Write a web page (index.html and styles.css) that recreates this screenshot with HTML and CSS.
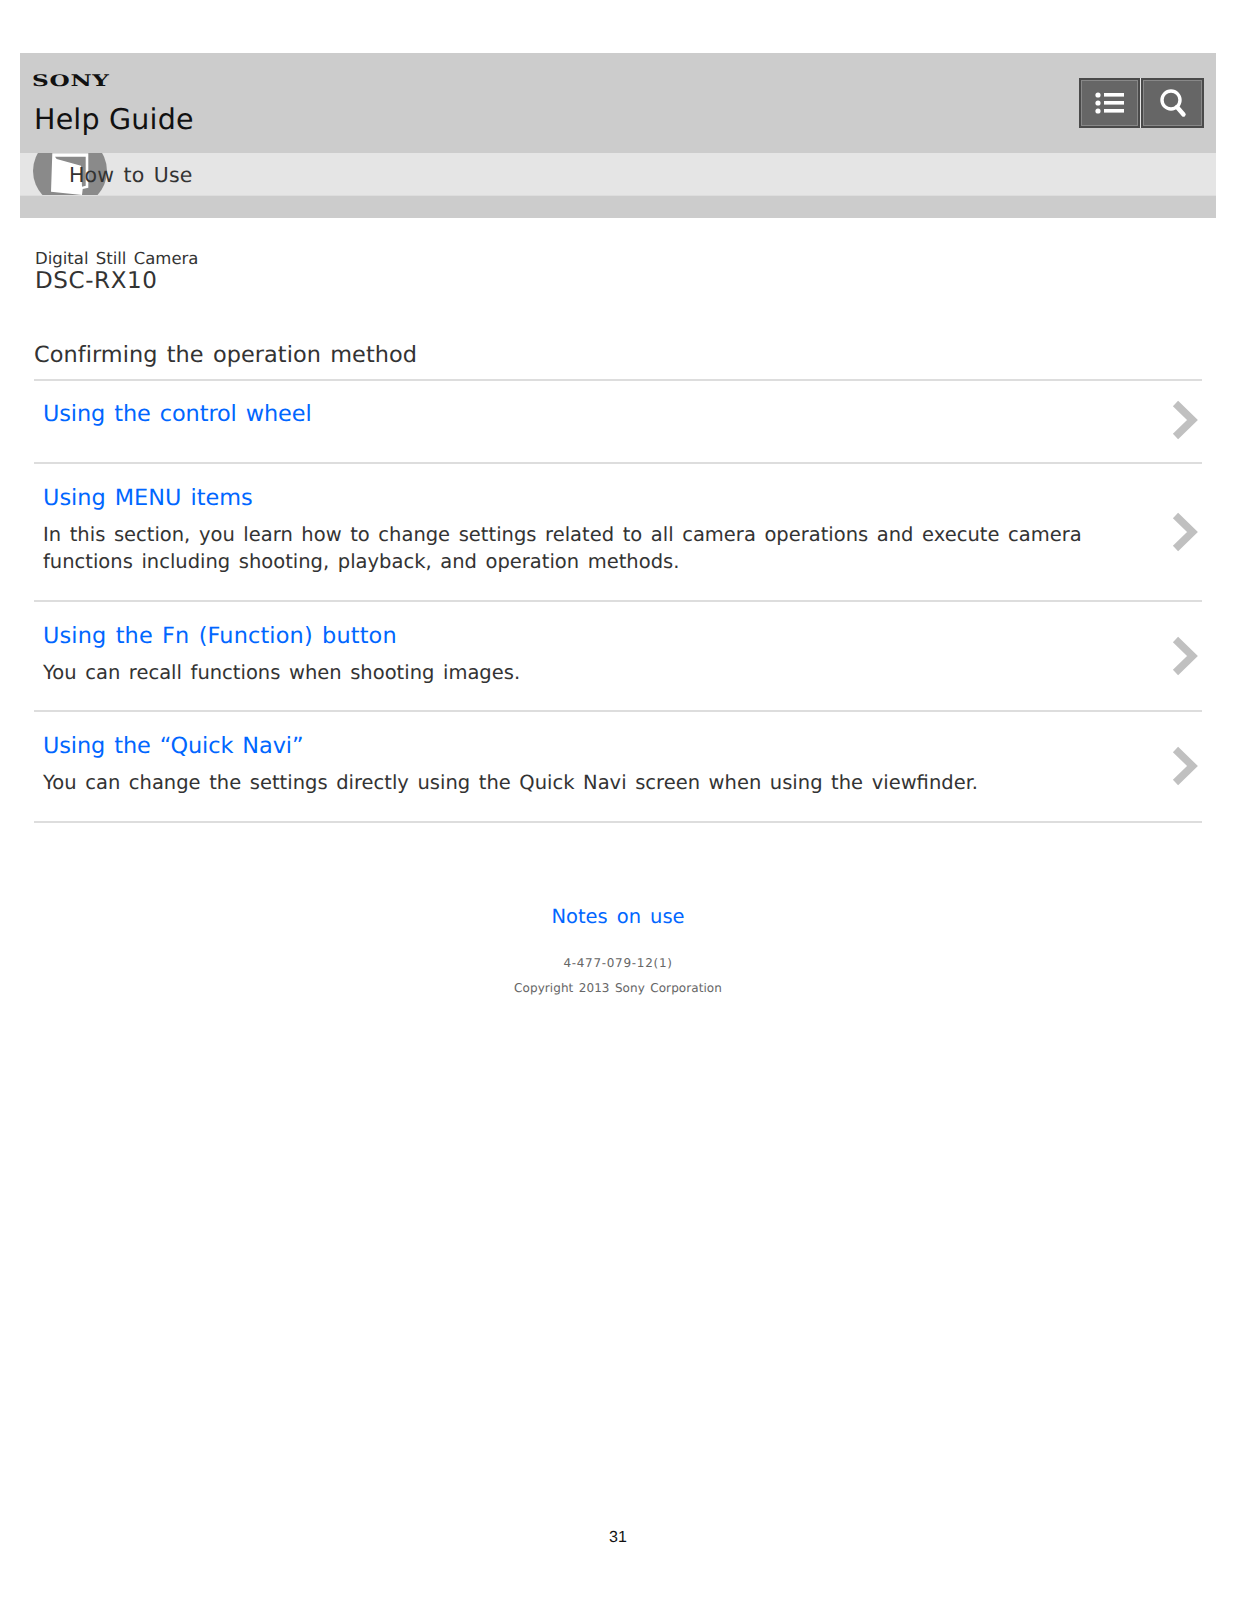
FILE: index.html
```html
<!DOCTYPE html>
<html lang="en">
<head>
<meta charset="utf-8">
<title>Help Guide</title>
<link rel="stylesheet" href="styles.css">
</head>
<body>
<div class="page">
<header class="header">
  <div class="top">
    <div class="brand">
      <div class="logo">SONY</div>
      <div class="title">Help Guide</div>
    </div>
    <div class="tools">
      <div class="tool"><svg width="30" height="22" viewBox="0 0 30 22"><g fill="#fff"><circle cx="3" cy="3" r="2.6"/><circle cx="3" cy="11" r="2.6"/><circle cx="3" cy="19" r="2.6"/><rect x="9" y="1" width="20" height="3.6"/><rect x="9" y="9" width="20" height="3.6"/><rect x="9" y="17" width="20" height="3.6"/></g></svg></div>
      <div class="tool"><svg width="28" height="30" viewBox="0 0 28 30"><circle cx="12" cy="12" r="9" fill="none" stroke="#fff" stroke-width="3.4"/><path d="M18 19l6.500 7.500" stroke="#fff" stroke-width="4.400" stroke-linecap="round"/></svg></div>
    </div>
  </div>
  <div class="crumb">
    <svg class="crumb-icon" width="76" height="43" viewBox="0 0 76 43"><ellipse cx="37" cy="18" rx="37" ry="36" fill="#8a8a8a"/><path d="M19.300 0.300H55.300V34.700L49.700 36L49 42L18 38.700z" fill="#fff"/><path d="M22 3.700H52.700V32.700L49 33.700L48 12.700L23.700 6z" fill="#8a8a8a"/></svg>
    <span class="crumb-text">How to Use</span>
  </div>
</header>
<section class="product">
  <div class="kind">Digital Still Camera</div>
  <div class="model">DSC-RX10</div>
</section>
<h1 class="heading">Confirming the operation method</h1>
<ul class="list">
  <li class="row row-a"><div class="body"><a class="link link-tight">Using the control wheel</a></div><svg class="chev" width="27" height="40" viewBox="0 0 27 40"><path d="M4.500 3.500l17 16.500L4.500 36.500" fill="none" stroke="#c0c0c0" stroke-width="7.500"/></svg></li>
  <li class="row"><div class="body"><a class="link">Using MENU items</a><p class="desc">In this section, you learn how to change settings related to all camera operations and execute camera functions including shooting, playback, and operation methods.</p></div><svg class="chev" width="27" height="40" viewBox="0 0 27 40"><path d="M4.500 3.500l17 16.500L4.500 36.500" fill="none" stroke="#c0c0c0" stroke-width="7.500"/></svg></li>
  <li class="row"><div class="body"><a class="link link-wide">Using the Fn (Function) button</a><p class="desc">You can recall functions when shooting images.</p></div><svg class="chev" width="27" height="40" viewBox="0 0 27 40"><path d="M4.500 3.500l17 16.500L4.500 36.500" fill="none" stroke="#c0c0c0" stroke-width="7.500"/></svg></li>
  <li class="row"><div class="body"><a class="link link-tight">Using the “Quick Navi”</a><p class="desc">You can change the settings directly using the Quick Navi screen when using the viewfinder.</p></div><svg class="chev" width="27" height="40" viewBox="0 0 27 40"><path d="M4.500 3.500l17 16.500L4.500 36.500" fill="none" stroke="#c0c0c0" stroke-width="7.500"/></svg></li>
</ul>
<footer class="foot">
  <a class="notes">Notes on use</a>
  <div class="small first">4-477-079-12(1)</div>
  <div class="small copy">Copyright 2013 Sony Corporation</div>
</footer>
<div class="pagenum">31</div>
</div>
</body>
</html>
```
FILE: styles.css
```css
* { box-sizing: border-box; }
html, body { margin: 0; padding: 0; background: #fff; }
body { font-family: "DejaVu Sans", sans-serif; color: #333; text-rendering: geometricPrecision; }
.page { height: 1600px; padding: 53px 21px 0 20px; display: flex; flex-direction: column; }
.header { background: #ccc; height: 165px; }
.top { height: 100px; display: flex; justify-content: space-between; padding: 0 12px 0 14px; }
.brand { padding-top: 17px; }
.logo { font-family: "DejaVu Serif", serif; font-weight: 700; font-size: 16px; line-height: 22px; letter-spacing: 0.5px; color: #111; transform: scaleX(1.45); transform-origin: left; width: 70px; margin-left: -2px; }
.title { font-size: 28.500px; line-height: 36px; color: #111; margin-top: 10px; letter-spacing: 0.2px; }
.tools { display: flex; gap: 1px; padding-top: 25px; }
.tool { width: 63px; height: 50px; background: #666; border: 2px solid #4a4a4a; box-shadow: inset 0 0 0 1px #888; display: flex; align-items: center; justify-content: center; }
.tool:first-child { width: 61px; }
.tool + .tool { box-shadow: inset 0 0 0 1px #888, -1px 0 0 #e5e5e5; }
.crumb { height: 43px; background: #e5e5e5; border-bottom: 1px solid #ddd; position: relative; padding-left: 49px; display: flex; align-items: center; overflow: hidden; }
.crumb-icon { position: absolute; left: 13px; top: 0; }
.crumb-text { position: relative; top: 1px; font-size: 20.500px; word-spacing: 2.500px; letter-spacing: 0.2px; }
.product { margin: 31px 0 0 15px; }
.kind { font-size: 16.500px; line-height: 20px; word-spacing: 2px; }
.model { font-size: 23px; line-height: 24px; letter-spacing: 0.6px; }
.heading { margin: 45px 0 0 14px; font-size: 22.400px; font-weight: 400; line-height: 34px; word-spacing: 2px; letter-spacing: 0.07px; }
.list { list-style: none; margin: 7px 0 0 14px; padding: 0; width: 1168px; border-top: 2px solid #ddd; }
.row { border-bottom: 2px solid #ddd; padding: 17px 4px 24.500px 9px; display: flex; align-items: center; justify-content: space-between; }
.row-a { height: 83px; padding-top: 16px; padding-bottom: 0; }
.row-a .body { align-self: flex-start; }
.row-a .chev { margin-top: -18px; }
.chev { position: relative; top: -1px; }
.row:not(.row-a) .chev { margin-top: 9px; }
.body { width: 1060px; }
.link { color: #06f; font-size: 22.400px; line-height: 34px; display: block; word-spacing: 2px; }
.link-tight { letter-spacing: -0.09px; }
.link-wide { letter-spacing: 0.14px; }
.desc { margin: 6px 0 0; font-size: 19.500px; line-height: 27px; word-spacing: 2.400px; }
.foot { text-align: center; margin-top: 77px; }
.notes { color: #06f; font-size: 19.500px; line-height: 34px; word-spacing: 2.800px; display: block; }
.small { font-size: 12px; line-height: 25px; color: #666; word-spacing: 1.500px; }
.first { margin-top: 17px; letter-spacing: 0.7px; }
.copy { letter-spacing: 0.07px; }
.pagenum { margin-top: auto; margin-bottom: 53px; text-align: center; font-family: "Liberation Sans", sans-serif; font-size: 16px; color: #111; }
```
